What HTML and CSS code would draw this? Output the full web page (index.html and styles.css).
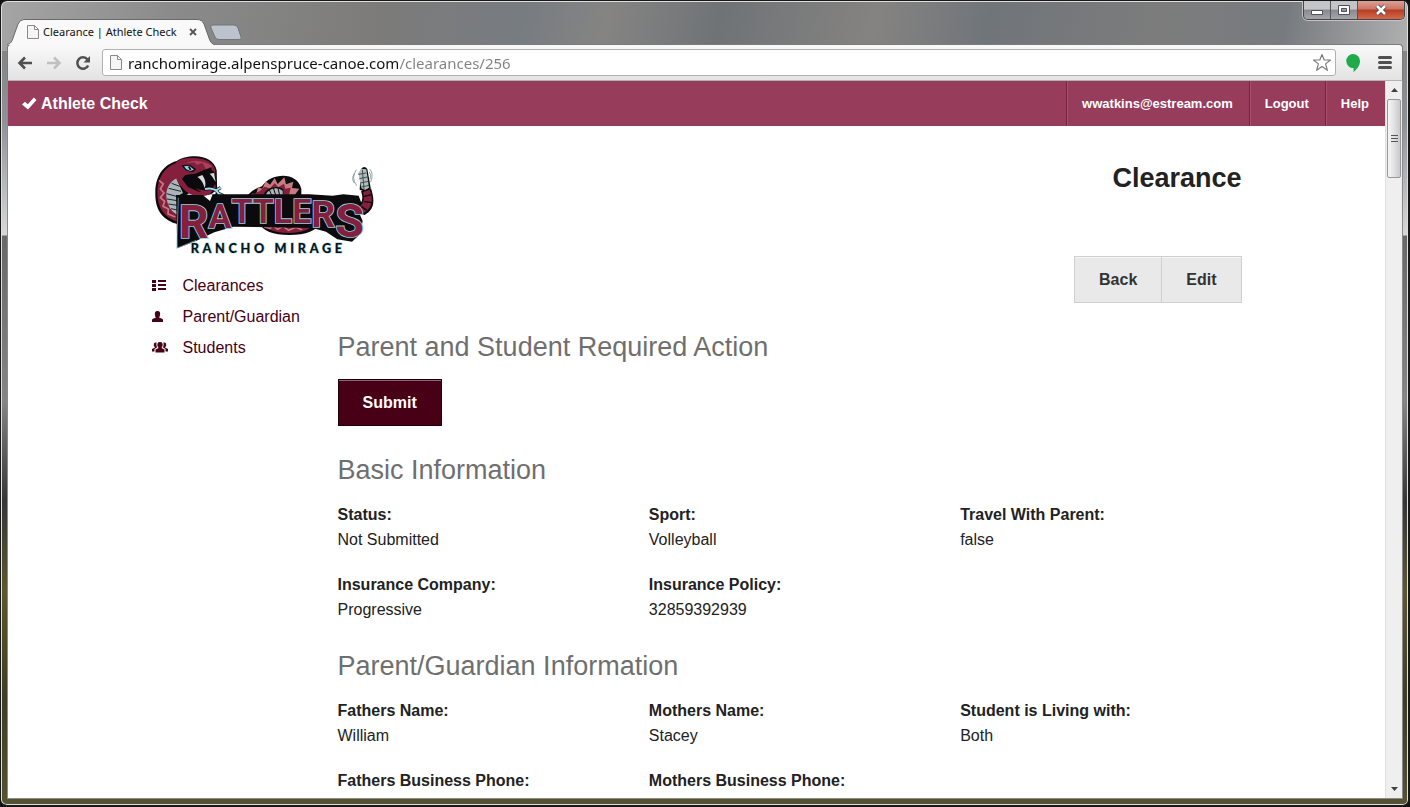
FILE: index.html
```html
<!DOCTYPE html>
<html lang="en">
<head>
    <meta charset="UTF-8">
    <meta name="viewport" content="width=device-width, initial-scale=1.0">
    <title>Clearance | Athlete Check</title>
    <link rel="stylesheet" href="styles.css">
</head>
<body>
    <div class="window">
        <header class="titlebar">
            <div class="tab">
                <svg class="tab-shape" width="208" height="26" viewBox="0 0 208 26" aria-hidden="true">
                    <path d="M0 25.500C4 25 5 22 6 19L11 5Q13 .5 17 .5H190Q195 .5 197 5L202 19Q204 25.500 208 25.500V26H0Z" fill="#f9f9f9"/>
                    <path d="M0 25.500C4 25 5 22 6 19L11 5Q13 .5 17 .5H190Q195 .5 197 5L202 19Q204 25.500 208 25.500" fill="none" stroke="#696969"/>
                </svg>
                <svg width="12" height="14" viewBox="0 0 12 14" aria-hidden="true">
                    <path d="M.5.5H7.500L11.500 4.500V13.500H.5ZM7.500.5V4.500H11.500" fill="#f5f5f5" stroke="#8a8a8a"/>
                </svg>
                <span class="tab-title">Clearance | Athlete Check</span>
                <button class="icon-button" aria-label="Close tab">
                    <svg width="8" height="8" viewBox="0 0 8 8"><path d="M1 1L7 7M7 1L1 7" stroke="#555" stroke-width="1.800"/></svg>
                </button>
            </div>
            <button class="icon-button new-tab" aria-label="New tab">
                <svg width="32" height="17" viewBox="0 0 32 17"><path d="M4 1H24Q27 1 28 4L31 13Q32 15.500 28 15.500H9Q6 15.500 5 13L1 4Q0 1 4 1Z" fill="#bcc3cc" stroke="#71767c"/></svg>
            </button>
            <div class="window-buttons">
                <button class="window-button" aria-label="Minimize">
                    <svg width="14" height="12" viewBox="0 0 14 12"><path d="M1.500 6.500H12.500V10.500H1.500Z" fill="#fff" stroke="#50505f"/></svg>
                </button>
                <button class="window-button" aria-label="Maximize">
                    <svg width="14" height="12" viewBox="0 0 14 12"><path d="M1.500 1.500H12.500V10.500H1.500Z" fill="#fff" stroke="#50505f"/><path d="M4.500 4.500H9.500V7.500H4.500Z" fill="#99999f" stroke="#50505f"/></svg>
                </button>
                <button class="window-button close" aria-label="Close">
                    <svg width="14" height="12" viewBox="0 0 14 12"><path d="M3 2L11 10M11 2L3 10" stroke="#54495a" stroke-width="4.500"/><path d="M3 2L11 10M11 2L3 10" stroke="#fff" stroke-width="2.500"/></svg>
                </button>
            </div>
        </header>

        <div class="toolbar">
            <button class="icon-button" aria-label="Back">
                <svg width="16" height="14" viewBox="0 0 16 14"><path d="M15 7H2.500M8 1.500L2.500 7L8 12.500" fill="none" stroke="#505050" stroke-width="2.600"/></svg>
            </button>
            <button class="icon-button" aria-label="Forward">
                <svg width="16" height="14" viewBox="0 0 16 14"><path d="M1 7H13.500M8 1.500L13.500 7L8 12.500" fill="none" stroke="#c0c0c0" stroke-width="2.600"/></svg>
            </button>
            <button class="icon-button" aria-label="Reload">
                <svg width="16" height="16" viewBox="0 0 16 16"><path d="M12.500 4.500A5.700 5.700 0 1 0 13.200 10.500" fill="none" stroke="#505050" stroke-width="2.500"/><path d="M15 1V7.500H8.500Z" fill="#505050"/></svg>
            </button>
            <div class="address-bar">
                <svg width="12" height="15" viewBox="0 0 12 15" aria-hidden="true">
                    <path d="M.5.5H7.500L11.500 4.500V14.500H.5ZM7.500.5V4.500H11.500" fill="#f5f5f5" stroke="#8a8a8a"/>
                </svg>
                <input class="address" type="text" aria-label="Address" value="ranchomirage.alpenspruce-canoe.com/clearances/256">
                <button class="icon-button" aria-label="Bookmark">
                    <svg width="20" height="19" viewBox="0 0 20 19"><path d="M10 1.500L12.200 7H18.500L13.600 10.900L15.400 17.300L10 13.600L4.600 17.300L6.400 10.900L1.500 7H7.800Z" fill="#fff" stroke="#7c7c7c" stroke-width="1.200" stroke-linejoin="round"/></svg>
                </button>
            </div>
            <button class="icon-button hangouts" aria-label="Hangouts">
                <svg width="14" height="18" viewBox="0 0 14 18"><path d="M7 0A7 7 0 0 1 14 7C14 11.500 11 15.500 7.500 18V14A7 7 0 0 1 7 0Z" fill="#1fab48"/></svg>
            </button>
            <button class="icon-button" aria-label="Menu">
                <svg width="14" height="13" viewBox="0 0 14 13"><path d="M1.500 1.500H12.500M1.500 6.500H12.500M1.500 11.500H12.500" stroke="#505050" stroke-width="3" stroke-linecap="round"/></svg>
            </button>
        </div>

        <div class="viewport">
            <div class="page">
                <nav class="top-bar">
                    <a class="brand" href="#">
                        <svg width="15" height="13" viewBox="0 0 15 13" aria-hidden="true"><path d="M0 7.500L3 4.700L5.800 7.300L11.800.5L14.500 3L6 12.500Z" fill="#fff"/></svg>
                        Athlete Check
                    </a>
                    <a class="top-link" href="#">wwatkins@estream.com</a>
                    <a class="top-link" href="#">Logout</a>
                    <a class="top-link" href="#">Help</a>
                </nav>

                <div class="container">
                    <div class="page-header">
                        <svg class="logo" width="222" height="103" viewBox="18 24 666 309" role="img" aria-label="Rattlers Rancho Mirage">
                            <!-- coils behind the lettering -->
                            <path d="M296 170C302 146 326 130 348 124C372 84 454 76 466 132L466 160Z" fill="#0b0b0d"/>
                            <path d="M306 160L318 146L331 147L336 126L349 131L359 109L372 119L386 99L395 117L415 97L420 118L442 110L438 129L460 131L442 156H306Z" fill="#c57b80"/>
                            <path d="M314 160Q322 145 342 138L355 125L372 130L386 115L397 127L414 116L418 131L434 128L428 156Z" fill="#841f3d"/>
                            <path d="M350 156C356 128 396 118 412 134V156Z" fill="#0b0b0d"/>
                            <path d="M358 156C360 134 392 120 410 138V156Z" fill="#a9b5b8"/>
                            <path d="M370 134L379 156M382 129L391 156M396 129L402 156" stroke="#0b0b0d" stroke-width="3"/>
                            <path d="M340 232H520C515 258 480 270 430 270C380 270 350 260 340 232Z" fill="#0b0b0d"/>
                            <path d="M350 232H506C494 255 466 264 430 264C382 264 358 252 350 232Z" fill="#841f3d"/>
                            <path d="M354 246L372 250L381 242L395 253L411 244L428 256L449 247L468 254" fill="none" stroke="#c57b80" stroke-width="5"/>
                            <!-- neck and belly -->
                            <path d="M92 48C48 60 28 100 28 140C26 196 50 226 98 238L106 150L214 150L212 76C206 48 178 34 148 34C124 34 104 40 92 48Z" fill="#0b0b0d"/>
                            <path d="M122 149L207 149L214 132L198 146Q160 158 132 143Z" fill="#fff"/>
                            <path d="M92 53C54 66 35 100 34 139C33 188 54 218 94 230V202C60 180 54 118 92 98Z" fill="#841f3d"/>
                            <path d="M39 106L52 117L43 132L54 144L43 158L56 169L51 184L67 192L66 207L88 216" fill="none" stroke="#c57b80" stroke-width="5"/>
                            <path d="M92 99C68 112 60 134 61 154C63 182 77 202 94 209L94 154L111 144C105 130 97 117 92 99Z" fill="#a9b5b8"/>
                            <path d="M77 115L101 124M68 130L105 139M62 146L94 155M63 162L94 167M67 177L94 181M75 191L94 195" stroke="#202428" stroke-width="3"/>
                            <path d="M90 52C103 40 125 38 144 39C178 39 207 55 207 78L208 98L195 68L172 76L148 86L118 90L108 102L126 126L158 140L195 145C178 158 143 157 121 140C98 121 85 99 87 71Z" fill="#841f3d"/>
                            <path d="M121 55C143 40 176 48 199 64L180 72L169 53L153 60L145 52Z" fill="#ab415a"/>
                            <!-- mouth, eye, fangs and tongue -->
                            <path d="M113 92L151 94L178 77L203 78L210 104L199 125L174 134L141 122Z" fill="#0b0b0d"/>
                            <path d="M106 61L132 59L151 73L139 82L119 76Z" fill="#0b0b0d"/>
                            <path d="M114 64L130 62L144 74L133 78L121 73Z" fill="#8fd1e8"/>
                            <path d="M128 64L134 75" stroke="#0b0b0d" stroke-width="5"/>
                            <path d="M154 96L169 90C178 103 181 117 176 129C172 116 167 104 154 96ZM191 86L204 84L209 111C203 101 198 93 191 86Z" fill="#d5dde0"/>
                            <path d="M149 129Q178 145 202 125L207 117L210 130L193 145Q170 150 149 129Z" fill="#841f3d"/>
                            <path d="M177 132C203 126 217 138 221 155M207 138L224 128M216 145L230 151L238 164" fill="none" stroke="#0b0b0d" stroke-width="10"/>
                            <path d="M177 132C203 126 217 138 221 155M207 138L224 128M216 145L230 151L238 164" fill="none" stroke="#9bdbed" stroke-width="6"/>
                            <!-- rattle -->
                            <path d="M645 72Q655 60 664 72L674 129L659 141L641 134Z" fill="#0b0b0d"/>
                            <path d="M645 71L661 73L669 128L658 135L646 130L637 85Z" fill="#afbdbf"/>
                            <path d="M637 88L661 84M640 101L664 96M643 114L667 109M646 126L669 121M649 74L654 132" stroke="#333b3e" stroke-width="2.500"/>
                            <path d="M631 74Q614 99 632 122M625 86Q615 102 625 114M671 72Q684 85 674 111M670 80Q677 90 672 103" fill="none" stroke="#66747a" stroke-width="2"/>
                            <path d="M645 139L675 130C688 171 684 194 656 210L632 204L628 185Q658 175 645 139Z" fill="#0b0b0d"/>
                            <path d="M651 141L671 134C682 163 681 186 655 203L635 200L634 187Q661 176 651 141Z" fill="#841f3d"/>
                            <path d="M654 154L676 149M655 170L678 173M646 185L663 196" stroke="#0b0b0d" stroke-width="4"/>
                            <!-- plate and lettering -->
                            <path d="M90 150L170 150L192 168L200 148H490L560 152L592 148L638 152L647 176L636 196L650 228L642 268L618 290L574 283L540 260L500 249L262 245L205 262L150 288L94 310Z" fill="#0b0b0d"/>
                            <path d="M97 158L92 310L150 286" fill="none" stroke="#8cc4d5" stroke-width="2"/>
                            <text class="logo-name" x="98" y="278"><tspan class="logo-end">R</tspan><tspan class="logo-mid" dy="-30">A</tspan><tspan class="logo-mid" dy="-14">TTLE</tspan><tspan class="logo-late" dy="13">R</tspan><tspan class="logo-end" dy="29">S</tspan></text>
                            <text class="logo-place" x="134" y="325">RANCHO MIRAGE</text>
                        </svg>
                        <h1 class="page-title">Clearance</h1>
                    </div>

                    <div class="columns">
                        <ul class="side-nav">
                            <li><a href="#">
                                <svg width="16" height="12" viewBox="0 0 16 12" aria-hidden="true"><path d="M0 0H4V3H0ZM0 4H4V7H0ZM0 8H4V11H0ZM6 0H14V2H6ZM6 4H14V6H6ZM6 8H14V10H6Z" fill="#480016"/></svg>
                                Clearances
                            </a></li>
                            <li><a href="#">
                                <svg width="16" height="12" viewBox="0 0 16 12" aria-hidden="true"><path d="M5.500 0C8 0 8.500 2 8 4Q7.500 6 7 6.500Q10 7.500 11 8.500V11H0V8.500Q1 7.500 4 6.500Q3 6 3 4C2.500 2 3 0 5.500 0Z" fill="#480016"/></svg>
                                Parent/Guardian
                            </a></li>
                            <li><a href="#">
                                <svg width="16" height="12" viewBox="0 0 16 12" aria-hidden="true"><path d="M8 0C10.500 0 11 2 10.500 4L9.500 6L12.500 7.500V10.500H3.500V7.500L6.500 6L5.500 4C5 2 5.500 0 8 0ZM4.500.5C2 0 1.500 2 2 4L3 5.500L0 7V9.500H2.500V7L5 5.500Q4 3 4.500.5ZM11.500.5C14 0 14.500 2 14 4L13 5.500L16 7V9.500H13.500V7L11 5.500Q12 3 11.500.5Z" fill="#480016"/></svg>
                                Students
                            </a></li>
                        </ul>

                        <main class="content">
                            <div class="button-group">
                                <button class="button secondary">Back</button>
                                <button class="button secondary">Edit</button>
                            </div>

                            <h2>Parent and Student Required Action</h2>
                            <button class="button primary">Submit</button>

                            <h2>Basic Information</h2>
                            <dl class="fields">
                                <div class="field"><dt>Status:</dt><dd>Not Submitted</dd></div>
                                <div class="field"><dt>Sport:</dt><dd>Volleyball</dd></div>
                                <div class="field"><dt>Travel With Parent:</dt><dd>false</dd></div>
                                <div class="field"><dt>Insurance Company:</dt><dd>Progressive</dd></div>
                                <div class="field"><dt>Insurance Policy:</dt><dd>32859392939</dd></div>
                            </dl>

                            <h2>Parent/Guardian Information</h2>
                            <dl class="fields">
                                <div class="field"><dt>Fathers Name:</dt><dd>William</dd></div>
                                <div class="field"><dt>Mothers Name:</dt><dd>Stacey</dd></div>
                                <div class="field"><dt>Student is Living with:</dt><dd>Both</dd></div>
                                <div class="field"><dt>Fathers Business Phone:</dt></div>
                                <div class="field"><dt>Mothers Business Phone:</dt></div>
                            </dl>
                        </main>
                    </div>
                </div>
            </div>

            <div class="scrollbar" aria-hidden="true">
                <svg class="scroll-arrow" width="7" height="4" viewBox="0 0 7 4"><path d="M0 4L3.500 0L7 4Z" fill="#404040"/></svg>
                <div class="scroll-track">
                    <div class="scroll-thumb">
                        <svg width="7" height="8" viewBox="0 0 7 8"><path d="M0 .5H7M0 3.500H7M0 6.500H7" stroke="#555"/></svg>
                    </div>
                </div>
                <svg class="scroll-arrow" width="7" height="4" viewBox="0 0 7 4"><path d="M0 0L3.500 4L7 0Z" fill="#404040"/></svg>
            </div>
        </div>
    </div>
</body>
</html>
```
FILE: styles.css
```css
* {
    box-sizing: border-box;
}
body {
    margin: 0;
    background: #101010;
    font-family: "Liberation Sans", Arial, sans-serif;
    font-size: 16px;
    line-height: 25px;
    color: #222;
}
a {
    text-decoration: none;
}
button {
    font-family: inherit;
    cursor: pointer;
}
svg {
    display: block;
    flex: none;
}

/* Window frame */
.window {
    display: flex;
    flex-direction: column;
    height: 100vh;
    overflow: hidden;
    padding: 0 5px 6px 6px;
    border: 1px solid #181818;
    border-width: 1px 2px 2px 1px;
    border-radius: 7px;
    box-shadow: inset 0 0 0 1px #dedede;
    background:
        linear-gradient(100deg, #a5a5a5 0%, #8b8b8b 12%, #7c7b7a 27%, #777c81 37%, #858483 43%, #6f7376 51%, #858381 62%, #70757a 70%, #7c7c7c 82%, #777b7f 91%, #b0b0b0 100%) 0 0 / 100% 50px no-repeat,
        linear-gradient(#858585 50px, #8d9298 120px, #d8d8d8 234px, #686868 235px, #858585 400px, #363638 500px, #5c5730 590px, #3e3d22 700px, #565333 100%);
}
.titlebar {
    display: flex;
    flex: none;
    align-items: flex-end;
    height: 43px;
}
.tab {
    position: relative;
    display: flex;
    align-items: center;
    width: 208px;
    height: 25px;
    padding: 0 18px 0 20px;
    font: 11px/24px "Noto Sans", "Open Sans", sans-serif;
    color: #111;
}
.tab > * {
    position: relative;
}
.tab .tab-shape {
    position: absolute;
    left: 0;
    top: 0;
}
.tab-title {
    flex: 1;
    margin-left: 4px;
    white-space: nowrap;
}
.icon-button {
    padding: 0;
    border: 0;
    background: none;
}
.new-tab {
    margin: 0 0 3px -5px;
}
.window-buttons {
    display: flex;
    align-self: flex-start;
    margin: 0 -2px 0 auto;
    border: 1px solid #45454b;
    border-top: 0;
    border-radius: 0 0 5px 5px;
    box-shadow: 0 0 0 1px #c4c4c8;
    overflow: hidden;
}
.window-button {
    display: flex;
    justify-content: center;
    align-items: center;
    width: 27px;
    height: 18px;
    padding: 0;
    border: 0;
    border-right: 1px solid #55555b;
    background: linear-gradient(#c4c5c8 45%, #88898e 50%, #a5a6aa);
}
.window-button.close {
    width: 46px;
    border: 0;
    background: linear-gradient(#dba297 0%, #cc7463 45%, #b63d24 50%, #d36a4c);
}

/* Browser toolbar */
.toolbar {
    display: flex;
    flex: none;
    align-items: center;
    gap: 13px;
    height: 37px;
    padding: 0 10px 0 9px;
    border: 1px solid #7b7b7b;
    border-bottom-color: #b2b2b2;
    border-radius: 4px 4px 0 0;
    background: linear-gradient(#f9f9f9, #e3e3e3);
}
.address-bar {
    display: flex;
    flex: 1;
    align-items: center;
    height: 27px;
    margin-left: -2px;
    padding: 0 3px 0 7px;
    border: 1px solid #b0b0b0;
    border-radius: 3px;
    background: #fff;
}
/* the host is black, the path after it is grey */
.address {
    flex: 1;
    min-width: 0;
    padding: 0 0 0 6px;
    border: 0;
    outline: 0;
    font: 15px/24px "Noto Sans", "Open Sans", sans-serif;
    color: transparent;
    background: linear-gradient(90deg, #111 276px, #808080 276px);
    -webkit-background-clip: text;
    background-clip: text;
}
.hangouts {
    margin: 0 5px 0 -3px;
}

/* Page area */
.viewport {
    display: flex;
    flex: 1;
    min-height: 0;
    border: 1px solid #8a8a8a;
    border-top: 0;
    background: #fff;
}
.page {
    flex: 1;
    min-width: 0;
    overflow: hidden;
}
.scrollbar {
    display: flex;
    flex-direction: column;
    align-items: center;
    width: 17px;
    padding: 7px 1px;
    border-left: 1px solid #e0e0e0;
    background: #efefef;
}
.scroll-track {
    flex: 1;
    width: 100%;
    padding: 7px 0;
}
.scroll-thumb {
    display: flex;
    justify-content: center;
    align-items: center;
    height: 79px;
    border: 1px solid #979797;
    border-radius: 2px;
    background: linear-gradient(90deg, #f6f6f6, #e2e2e4 50%, #c8c8ce);
}

.top-bar {
    display: flex;
    height: 45px;
    line-height: 45px;
    font-size: 13px;
    font-weight: bold;
    background: #973c5b;
}
.top-bar a {
    color: #fff;
}
.brand {
    display: flex;
    align-items: center;
    gap: 4px;
    margin-right: auto;
    padding-left: 14px;
    font-size: 16px;
}
.top-link {
    padding: 0 16px 0 15px;
    border-left: 1px solid #74243f;
    box-shadow: inset 1px 0 0 #a9506d;
}

.container {
    max-width: 1120px;
    margin: 0 auto;
    padding: 27px 15px 0;
}
.page-header {
    display: flex;
    justify-content: space-between;
    align-items: flex-start;
}
.logo-name {
    font-family: Roboto, sans-serif;
    font-weight: bold;
    fill: #841f3d;
    stroke: #9bd3e2;
    stroke-width: 5px;
    paint-order: stroke;
}
.logo-end {
    font-size: 140px;
}
.logo-mid {
    font-size: 102px;
}
.logo-late {
    font-size: 112px;
}
.logo-place {
    font-family: Lato, sans-serif;
    font-size: 38px;
    font-weight: 900;
    letter-spacing: 11px;
    fill: #0c1216;
    stroke: #9bd3e2;
    stroke-width: 3px;
    paint-order: stroke;
}
.page-title {
    margin: 6px 0 0;
    font-size: 27px;
    line-height: 38px;
}
.columns {
    display: grid;
    grid-template-columns: 171px 1fr;
    gap: 15px;
}
.side-nav {
    margin: 0;
    padding: 14px 0 0;
    list-style: none;
}
.side-nav a {
    display: flex;
    align-items: center;
    gap: 15px;
    height: 31px;
    color: #480016;
}
.button-group {
    display: flex;
    justify-content: flex-end;
    margin-bottom: 25px;
}
.button {
    height: 47px;
    padding: 0 24px;
    border: 1px solid #1e0009;
    font-size: 16px;
    font-weight: bold;
}
.secondary {
    border-color: #cfcfcf;
    box-shadow: inset 0 1px 0 #f6f6f6;
    background: #e9e9e9;
    color: #333;
}
.secondary + .secondary {
    margin-left: -1px;
}
.primary {
    display: block;
    margin-bottom: 25px;
    box-shadow: inset 0 1px 0 #91667a;
    background: #480016;
    color: #fff;
}
h2 {
    margin: 0 0 13px;
    font-size: 27px;
    font-weight: normal;
    line-height: 38px;
    color: #6f6f6f;
}
.fields {
    display: grid;
    grid-template-columns: repeat(3, 1fr);
    gap: 20px 30px;
    margin: 0 0 25px;
}
dt {
    font-weight: bold;
}
dd {
    margin: 0;
}
```
